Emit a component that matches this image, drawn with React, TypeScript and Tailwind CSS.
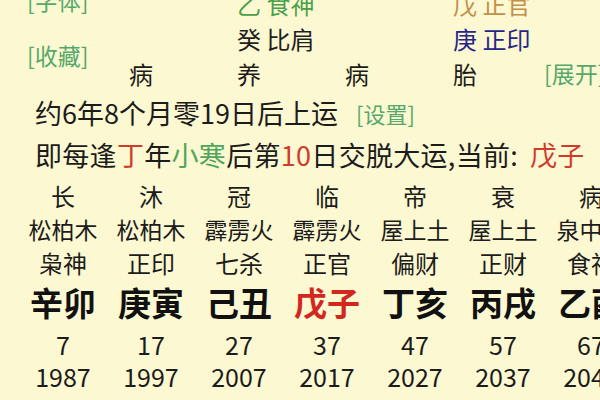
const pillars = [
  { top: "", topColor: "", mid: "", midColor: "", state: "病" },
  { top: "乙 食神", topColor: "text-[#4a9f4c]", mid: "癸 比肩", midColor: "text-[#1f1f1f]", state: "养" },
  { top: "", topColor: "", mid: "", midColor: "", state: "病" },
  { top: "戊 正官", topColor: "text-[#c0914a]", mid: "庚 正印", midColor: "text-[#25258a]", state: "胎" },
];

const dayun = [
  { zs: "长", ny: "松柏木", ss: "枭神", gz: "辛卯", age: 7, year: 1987 },
  { zs: "沐", ny: "松柏木", ss: "正印", gz: "庚寅", age: 17, year: 1997 },
  { zs: "冠", ny: "霹雳火", ss: "七杀", gz: "己丑", age: 27, year: 2007 },
  { zs: "临", ny: "霹雳火", ss: "正官", gz: "戊子", age: 37, year: 2017, current: true },
  { zs: "帝", ny: "屋上土", ss: "偏财", gz: "丁亥", age: 47, year: 2027 },
  { zs: "衰", ny: "屋上土", ss: "正财", gz: "丙戌", age: 57, year: 2037 },
  { zs: "病", ny: "泉中水", ss: "食神", gz: "乙酉", age: 67, year: 2047 },
];

export default function App() {
  return (
    <div className="w-[600px] h-[400px] overflow-hidden bg-[#fcf8d1] text-[#1c1c1c] whitespace-nowrap [font-family:'Noto_Sans_CJK_SC','Noto_Sans',sans-serif]">
      {/* pillars summary */}
      <div className="flex -mt-[14px]">
        <div className="w-[129px] shrink-0 pl-[27px] flex flex-col gap-[27px] text-[23px] leading-[28px] text-[#56a96a]">
          <span>[字体]</span>
          <span>[收藏]</span>
        </div>
        {pillars.map((p, i) => (
          <div key={i} className="w-[108px] shrink-0 flex flex-col text-[24px] leading-[35px]">
            <div className={`h-[35px] ${p.topColor}`}>{p.top}</div>
            <div className={`h-[35px] ${p.midColor}`}>{p.mid}</div>
            <div className="h-[35px] flex">
              <span>{p.state}</span>
              {i === 3 && <span className="ml-[67px] text-[23px] text-[#56a96a]">[展开]</span>}
            </div>
          </div>
        ))}
      </div>

      {/* start info */}
      <div className="pl-[35px] text-[27px] leading-[42px] mt-[1px]">
        <div className="flex items-center">
          <span>约6年8个月零19日后上运</span>
          <span className="ml-[18px] text-[22px] text-[#56a96a]">[设置]</span>
        </div>
        <div className="flex tracking-[0.3px]">
          <span>
            即每逢<span className="text-[#cf3b2c]">丁</span>年<span className="text-[#4fa65a]">小寒</span>后第
            <span className="text-[#cf3b2c]">10</span>日交脱大运,当前:
          </span>
          <span className="ml-[12px] text-[#cf3b2c]">戊子</span>
        </div>
      </div>

      {/* dayun grid */}
      <div className="flex pl-[19px] mt-[3px]">
        {dayun.map((d) => (
          <div key={d.year} className="w-[88px] shrink-0 flex flex-col items-center">
            <div className="text-[24px] leading-[34px]">{d.zs}</div>
            <div className="text-[23px] leading-[32px]">{d.ny}</div>
            <div className="text-[24px] leading-[36px]">{d.ss}</div>
            <div className={`text-[33px] leading-[42px] font-bold ${d.current ? "text-[#d2261e]" : "text-[#111]"}`}>{d.gz}</div>
            <div className="text-[25px] leading-[32px] mt-[5px]">{d.age}</div>
            <div className="text-[25px] leading-[32px]">{d.year}</div>
          </div>
        ))}
      </div>
    </div>
  );
}
